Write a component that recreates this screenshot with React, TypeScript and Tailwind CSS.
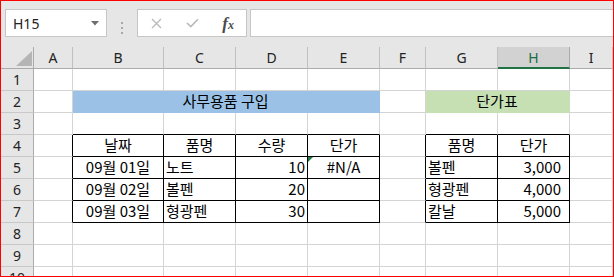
import React from 'react';

const COLS = ['A', 'B', 'C', 'D', 'E', 'F', 'G', 'H', 'I'];
const ROW_COUNT = 10;

type Align = 'left' | 'center' | 'right';
type Cell = { text: string; align: Align; wide?: boolean; flag?: boolean };

const c = (text: string): Cell => ({ text, align: 'center' });
const l = (text: string): Cell => ({ text, align: 'left' });
const r = (text: string, wide = false): Cell => ({ text, align: 'right', wide });

// row -> col index (A=0) -> cell
const data: Record<number, Record<number, Cell>> = {
  4: { 1: c('날짜'), 2: c('품명'), 3: c('수량'), 4: c('단가'), 6: c('품명'), 7: c('단가') },
  5: { 1: c('09월 01일'), 2: l('노트'), 3: r('10'), 4: { text: '#N/A', align: 'center', flag: true }, 6: l('볼펜'), 7: r('3,000', true) },
  6: { 1: c('09월 02일'), 2: l('볼펜'), 3: r('20'), 6: l('형광펜'), 7: r('4,000', true) },
  7: { 1: c('09월 03일'), 2: l('형광펜'), 3: r('30'), 6: l('칼날'), 7: r('5,000', true) },
};

const inTable = (row: number, col: number) =>
  row >= 4 && row <= 7 && ((col >= 1 && col <= 4) || (col >= 6 && col <= 7));

const cellFont = { fontFamily: '"Noto Sans CJK KR", "Noto Sans", sans-serif' };

function Toolbar() {
  return (
    <div className="flex h-[46px] bg-[#e6e6e6] pt-[8px]" style={{ fontFamily: '"Noto Sans", sans-serif' }}>
      <div className="ml-[4px] flex h-[28px] w-[102px] items-center justify-between border border-[#c6c6c6] bg-white pl-[7px] pr-[7px] text-[14px] text-[#222]">
        <span>H15</span>
        <svg width="8" height="5" viewBox="0 0 8 5">
          <path d="M0 0 L8 0 L4 4.5 Z" fill="#6e6e6e" />
        </svg>
      </div>
      <div className="flex w-[30px] flex-col items-center justify-center gap-[3px]">
        <span className="h-[2px] w-[2px] bg-[#a6a6a6]" />
        <span className="h-[2px] w-[2px] bg-[#a6a6a6]" />
        <span className="h-[2px] w-[2px] bg-[#a6a6a6]" />
      </div>
      <div className="flex h-[28px] w-[110px] items-center border border-[#c6c6c6] bg-white pl-[1px]">
        <div className="flex w-[36px] justify-center">
          <svg width="11" height="11" viewBox="0 0 11 11">
            <path d="M1 1 L10 10 M10 1 L1 10" stroke="#b9b9b9" strokeWidth="1.3" />
          </svg>
        </div>
        <div className="flex w-[36px] justify-center">
          <svg width="13" height="10" viewBox="0 0 13 10">
            <path d="M1 5 L4.8 8.6 L12 1.2" stroke="#b9b9b9" strokeWidth="1.6" fill="none" />
          </svg>
        </div>
        <div className="flex w-[36px] justify-center">
          <span className="font-bold italic leading-none text-[#4a4a4a]" style={{ fontFamily: '"Liberation Serif", serif' }}>
            <span className="text-[17px]">f</span>
            <span className="text-[12px]">x</span>
          </span>
        </div>
      </div>
      <div className="ml-[3px] h-[28px] flex-1 border-y border-l border-[#c6c6c6] bg-white" />
    </div>
  );
}

function HeaderRow() {
  return (
    <>
      <div className="relative border-r border-b border-r-[#ababab] border-b-[#ababab] bg-[#e6e6e6]">
        <svg className="absolute right-[1px] bottom-[2px]" width="16" height="15" viewBox="0 0 16 15">
          <path d="M16 0 L16 15 L0 15 Z" fill="#b5b5b5" />
        </svg>
      </div>
      {COLS.map((col) =>
        col === 'H' ? (
          <div
            key={col}
            className="flex items-center justify-center border-r border-b-2 border-r-[#ababab] border-b-[#217346] bg-[#d2d2d2] text-[14px] text-[#1e6b40]"
          >
            {col}
          </div>
        ) : (
          <div
            key={col}
            className="flex items-center justify-center border-r border-b border-r-[#c0c0c0] border-b-[#ababab] bg-[#e6e6e6] text-[14px] text-[#222]"
          >
            {col}
          </div>
        )
      )}
    </>
  );
}

function DataCell({ row, col }: { row: number; col: number }) {
  const cell = data[row]?.[col];
  const blackRight = inTable(row, col) || inTable(row, col + 1);
  const blackBottom = inTable(row, col) || inTable(row + 1, col);
  const right = blackRight ? 'border-r-black' : 'border-r-[#d4d4d4]';
  const bottom = blackBottom ? 'border-b-black' : 'border-b-[#d4d4d4]';
  let justify = 'justify-center';
  let pad = '';
  if (cell?.align === 'left') {
    justify = 'justify-start';
    pad = 'pl-[2px]';
  } else if (cell?.align === 'right') {
    justify = 'justify-end';
    pad = cell.wide ? 'pr-[8px]' : 'pr-[2px]';
  }
  return (
    <div
      className={`relative flex items-end overflow-visible whitespace-pre border-r border-b bg-white pb-[1px] text-[15px] leading-[20px] text-black ${right} ${bottom} ${justify} ${pad}`}
      style={cellFont}
    >
      {cell?.flag && (
        <svg className="absolute top-0 left-0" width="5" height="5" viewBox="0 0 5 5">
          <path d="M0 0 L5 0 L0 5 Z" fill="#1e7a45" />
        </svg>
      )}
      {cell?.text}
    </div>
  );
}

function RowHeader({ row }: { row: number }) {
  return (
    <div
      className="flex items-center justify-center border-r border-b border-r-[#ababab] border-b-[#c8c8c8] bg-[#e6e6e6] text-[14px] text-[#222]"
      style={{ fontFamily: '"Noto Sans", sans-serif' }}
    >
      {row}
    </div>
  );
}

function Row2() {
  return (
    <>
      <RowHeader row={2} />
      <DataCell row={2} col={0} />
      <div
        className="col-span-4 -mt-px -ml-px flex items-end justify-center border-r border-b border-[#9bc2e6] bg-[#9bc2e6] pb-[1px] text-[15px] leading-[20px] text-black"
        style={cellFont}
      >
        사무용품 구입
      </div>
      <DataCell row={2} col={5} />
      <div
        className="col-span-2 -mt-px -ml-px flex items-end justify-center border-r border-b border-[#c6e0b4] bg-[#c6e0b4] pb-[1px] text-[15px] leading-[20px] text-black"
        style={cellFont}
      >
        단가표
      </div>
      <DataCell row={2} col={8} />
    </>
  );
}

export default function App() {
  const rows = Array.from({ length: ROW_COUNT }, (_, i) => i + 1);
  return (
    <div className="h-[277px] w-[614px] overflow-hidden border border-[#ff0000] bg-white">
      <Toolbar />
      <div
        className="grid auto-rows-[22px] grid-cols-[33px_39px_91px_72px_72px_72px_46px_72px_72px_1fr]"
        style={{ fontFamily: '"Noto Sans", sans-serif' }}
      >
        <HeaderRow />
        {rows.map((row) =>
          row === 2 ? (
            <Row2 key={row} />
          ) : (
            <React.Fragment key={row}>
              <RowHeader row={row} />
              {COLS.map((_, col) => (
                <DataCell key={col} row={row} col={col} />
              ))}
            </React.Fragment>
          )
        )}
      </div>
    </div>
  );
}
